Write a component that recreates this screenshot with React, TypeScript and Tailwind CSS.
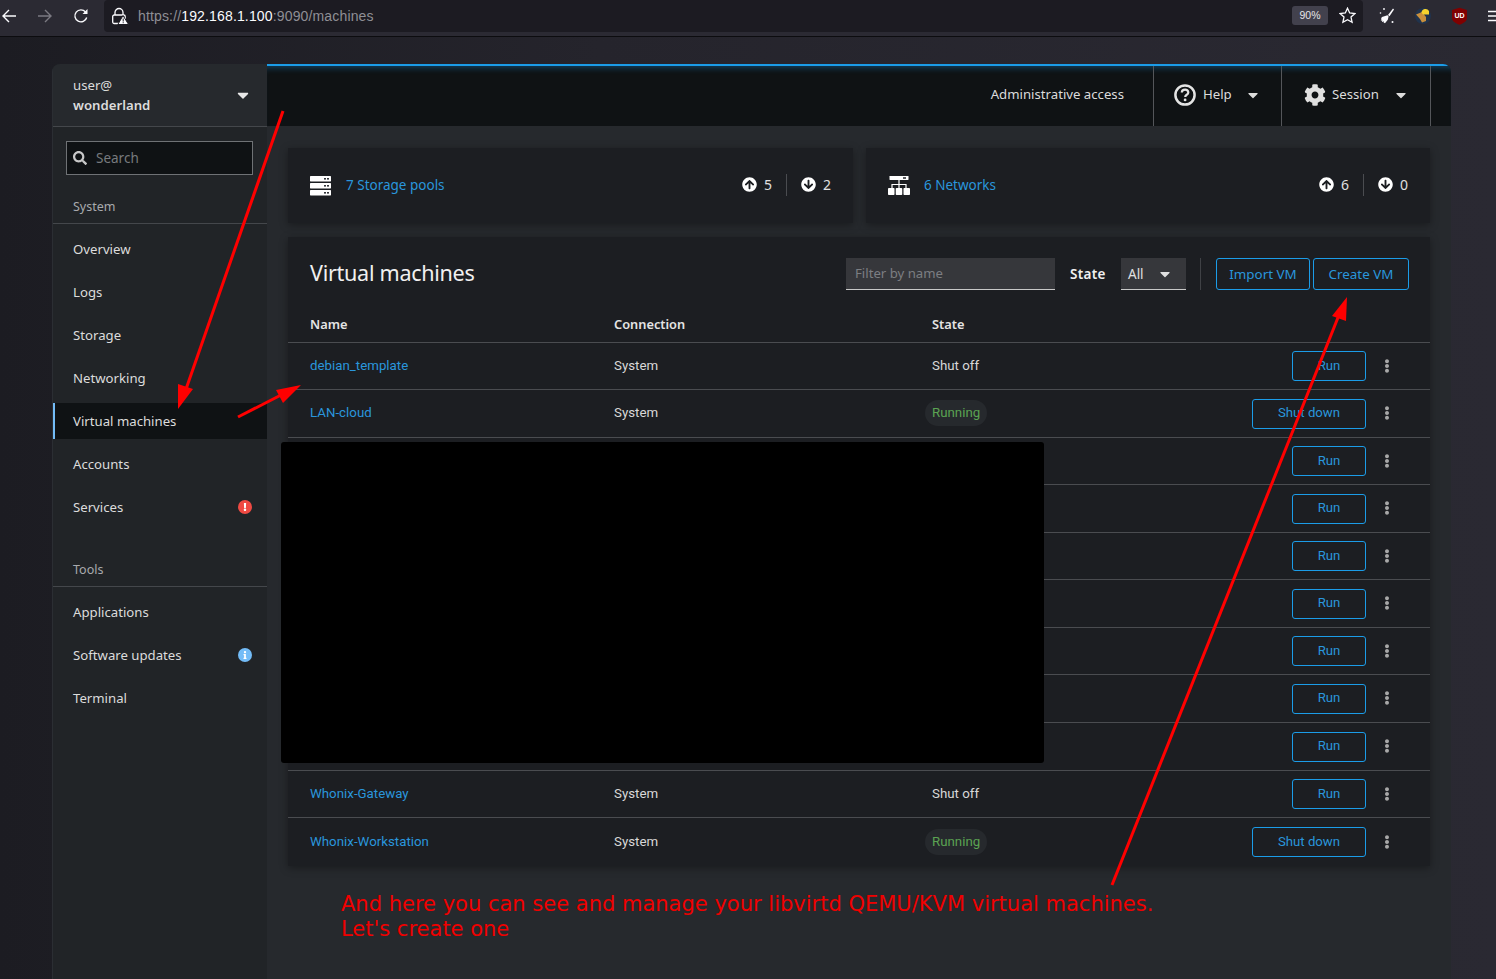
import React from "react";
import { FaArrowCircleUp, FaArrowCircleDown, FaCog, FaSearch, FaCaretDown, FaEllipsisV, FaExclamation, FaInfo } from "react-icons/fa";

const font = { fontFamily: '"Noto Sans", sans-serif' };
const tableFont = { fontFamily: 'Roboto, "Noto Sans", sans-serif' };

function Nav({ label, active, badge }: { label: string; active?: boolean; badge?: "err" | "info" }) {
  return (
    <div className={`h-[36px] flex items-center justify-between pr-[15px] text-[13.200px] text-[#dcdcdc] ${active ? "bg-[#0f1214] border-l-2 border-[#73bcf7] pl-[18px]" : "pl-[20px]"}`}>
      <span className="pt-[1px]">{label}</span>
      {badge === "err" && (
        <span className="w-[14px] h-[14px] rounded-full bg-[#ef4a43] flex items-center justify-center text-white"><FaExclamation size={8} /></span>
      )}
      {badge === "info" && (
        <span className="w-[14px] h-[14px] rounded-full bg-[#73bcf7] flex items-center justify-center text-white"><FaInfo size={8} /></span>
      )}
    </div>
  );
}

function SideHeading({ label }: { label: string }) {
  return (
    <div className="h-[27px] pl-[20px] border-b border-[#44474b] text-[12.500px] text-[#a8aaad] flex items-start">
      <span className="leading-[17px] mt-[1px]">{label}</span>
    </div>
  );
}

function ServerIcon() {
  return (
    <svg width="21" height="20" viewBox="0 0 21 20">
      <g fill="#fff">
        <rect x="0" y="0" width="21" height="5.400" rx="0.600" />
        <rect x="0" y="7" width="21" height="5.400" rx="0.600" />
        <rect x="0" y="14" width="21" height="5.400" rx="0.600" />
      </g>
      <g fill="#33353a">
        <rect x="14" y="2" width="2" height="1.600" /><rect x="17" y="2" width="2" height="1.600" />
        <rect x="14" y="9" width="2" height="1.600" /><rect x="17" y="9" width="2" height="1.600" />
        <rect x="14" y="16" width="2" height="1.600" /><rect x="17" y="16" width="2" height="1.600" />
      </g>
    </svg>
  );
}

function NetworkIcon() {
  return (
    <svg width="22" height="19" viewBox="0 0 22 19">
      <rect x="1.500" y="0" width="19" height="4" rx="0.400" fill="#fff" />
      <rect x="15" y="1.200" width="3" height="1.600" fill="#33353a" />
      <path d="M11 4v5M4 13V8.500h14V13M11 9v4" stroke="#fff" strokeWidth="1.200" fill="none" />
      <rect x="0" y="12" width="6.500" height="7" rx="0.800" fill="#fff" />
      <rect x="7.750" y="12" width="6.500" height="7" rx="0.800" fill="#fff" />
      <rect x="15.500" y="12" width="6.500" height="7" rx="0.800" fill="#fff" />
    </svg>
  );
}

function HelpIcon() {
  return (
    <svg width="22" height="22" viewBox="0 0 22 22">
      <circle cx="11" cy="11" r="9.600" fill="none" stroke="#e4e4e4" strokeWidth="2.500" />
      <path d="M7.800 8.600c0-1.800 1.400-3 3.300-3s3.200 1.100 3.200 2.800c0 2.400-3.100 2.300-3.100 4.500" fill="none" stroke="#e4e4e4" strokeWidth="2.200" />
      <circle cx="11.100" cy="15.900" r="1.400" fill="#e4e4e4" />
    </svg>
  );
}

function Toolbar() {
  return (
    <div className="h-[37px] shrink-0 bg-[#2b2a33] border-b border-[#0c0c0f] flex items-center text-white relative overflow-hidden">
      <div className="w-[104px] shrink-0 flex items-center pl-[1px] -mt-[4px]">
        <svg width="16" height="16" viewBox="0 0 16 16" className="mr-[20px]" fill="none" stroke="#fbfbfe" strokeWidth="1.400">
          <path d="M15 8H2M8 2 2 8l6 6" />
        </svg>
        <svg width="16" height="16" viewBox="0 0 16 16" className="mr-[20px]" fill="none" stroke="#7b7a82" strokeWidth="1.400">
          <path d="M1 8h13M8 2l6 6-6 6" />
        </svg>
        <svg width="16" height="16" viewBox="0 0 16 16" fill="none" stroke="#fbfbfe" strokeWidth="1.400">
          <path d="M13.700 9.500A6 6 0 1 1 12.500 4" />
          <path d="M14.500 1v5h-5z" fill="#fbfbfe" stroke="none" />
        </svg>
      </div>
      <div className="w-[1259px] shrink-0 h-[32px] -mt-[5px] bg-[#1c1b22] rounded-[4px] flex items-center">
        <svg width="18" height="18" viewBox="0 0 18 18" className="ml-[7px]">
          <path d="M4 8V5.500a4 4 0 0 1 8 0V8" fill="none" stroke="#fbfbfe" strokeWidth="1.300" />
          <rect x="1.700" y="8" width="12.500" height="8.500" rx="1.500" fill="none" stroke="#fbfbfe" strokeWidth="1.300" />
          <path d="M12 8.500 17.600 17.500H6.800z" fill="#fbfbfe" stroke="#1c1b22" />
          <rect x="11.700" y="11.500" width="1" height="3" fill="#1c1b22" />
          <rect x="11.700" y="15.200" width="1" height="1" fill="#1c1b22" />
        </svg>
        <span className="ml-[9px] pt-[1px] text-[14px] tracking-[0.15px]" style={{ fontFamily: '"Liberation Sans", sans-serif' }}>
          <span className="text-[#8f8f95]">https://</span>
          <span className="text-[#fbfbfe]">192.168.1.100</span>
          <span className="text-[#8f8f95]">:9090/machines</span>
        </span>
        <span className="ml-auto w-[36px] h-[19px] mr-[11px] bg-[#42414d] rounded-[3px] text-[10.500px] text-[#e5e5e8] flex items-center justify-center" style={{ fontFamily: '"Liberation Sans", sans-serif' }}>90%</span>
        <svg width="17" height="17" viewBox="0 0 17 17" className="mr-[7px]" fill="none" stroke="#fbfbfe" strokeWidth="1.300">
          <path d="M8.500 1.200l2.200 4.800 5.200.6-3.900 3.500 1.100 5.200-4.600-2.600-4.600 2.600 1.100-5.200L1.100 6.600l5.200-.6z" />
        </svg>
      </div>
      <div className="flex items-center ml-[15px] shrink-0 -mt-[5px]">
        <svg width="18" height="18" viewBox="0 0 18 18" fill="#fbfbfe" className="mr-[18px]">
          <path d="M15 1.500 10 8l1.500 1.200L16 2.400z" />
          <path d="M9.500 8.300 4 10l-1 1.500.7.400-1 1.300.9.500.7-.8-.4 1.500 1 .7 1-1.200-.3 1.700 1.400.6 2.800-3.400.8-3.200z" />
          <circle cx="6" cy="2" r="0.900" /><circle cx="2.500" cy="6" r="0.800" /><circle cx="14.500" cy="15" r="1" />
        </svg>
        <svg width="18" height="18" viewBox="0 0 18 18" className="mr-[19px]">
          <circle cx="9" cy="9" r="8" fill="#20334d" />
          <path d="M2 7.500 8 5l4 5v4l-4 1.500-2-3.500z" fill="#c98f3c" />
          <path d="M7.500 5.500a4 3.800 0 0 1 7.500-1.500v3.500H9z" fill="#f6d32d" />
        </svg>
        <svg width="17" height="18" viewBox="0 0 17 18" className="mr-[20px]">
          <path d="M1 3 8.500 0.800 16 3v8c0 3-3.500 5.500-7.500 6.800C4.500 16.500 1 14 1 11z" fill="#800000" />
          <text x="8.500" y="11" textAnchor="middle" fontSize="7" fontWeight="700" fill="#fff" fontFamily="Liberation Sans, sans-serif">UD</text>
        </svg>
        <svg width="16" height="14" viewBox="0 0 16 14" stroke="#fbfbfe" strokeWidth="1.300" className="shrink-0">
          <path d="M0 2.500h14M0 7h14M0 11.500h14" />
        </svg>
      </div>
    </div>
  );
}

function Outline({ children, w, h, narrow }: { children: React.ReactNode; w: string; h: string; narrow?: boolean }) {
  return (
    <div
      className={`${w} ${h} border border-[#1b9ce8] rounded-[3px] flex items-center justify-center text-[#2a96dc] ${narrow ? "text-[13.200px] pb-[1px]" : "text-[13.400px]"}`}
      style={narrow ? tableFont : undefined}
    >
      {children}
    </div>
  );
}

type Row = { name?: string; conn?: string; state?: string; action: string; h: string };
const rows: Row[] = [
  { name: "debian_template", conn: "System", state: "Shut off", action: "Run", h: "h-[47px]" },
  { name: "LAN-cloud", conn: "System", state: "Running", action: "Shut down", h: "h-[48px]" },
  { action: "Run", h: "h-[47px]" },
  { action: "Run", h: "h-[48px]" },
  { action: "Run", h: "h-[47px]" },
  { action: "Run", h: "h-[48px]" },
  { action: "Run", h: "h-[47px]" },
  { action: "Run", h: "h-[48px]" },
  { action: "Run", h: "h-[48px]" },
  { name: "Whonix-Gateway", conn: "System", state: "Shut off", action: "Run", h: "h-[47px]" },
  { name: "Whonix-Workstation", conn: "System", state: "Running", action: "Shut down", h: "h-[48px]" },
];

function VmRow({ r, last }: { r: Row; last: boolean }) {
  return (
    <div className={`${r.h} flex items-center text-[13.300px] ${last ? "" : "border-b border-[#4a4c50]"}`} style={tableFont}>
      <div className="w-[304px] pl-[22px] shrink-0 box-content text-[#2a96dc] -mt-[1px]">{r.name}</div>
      <div className="w-[318px] shrink-0 text-[#d8d8d8] -mt-[1px]">{r.conn}</div>
      <div className="flex-1 text-[#d8d8d8] -mt-[1px]">
        {r.state === "Running" ? (
          <span className="inline-flex items-center h-[26px] px-[7px] ml-[-7px] rounded-full bg-[#26292d] text-[#5ba352]">Running</span>
        ) : (
          r.state
        )}
      </div>
      <Outline narrow w={r.action === "Run" ? "w-[74px]" : "w-[114px]"} h="h-[30px]">{r.action}</Outline>
      <div className="w-[64px] pl-[14px] shrink-0 text-[#a8a8a8] -mt-[1px]"><FaEllipsisV size={14} /></div>
    </div>
  );
}

function Stat({ up, n }: { up?: boolean; n: string }) {
  return (
    <span className="flex items-center gap-[7px] text-[14px] text-[#e0e0e0]">
      {up ? <FaArrowCircleUp size={15} color="#fff" /> : <FaArrowCircleDown size={15} color="#fff" />}
      {n}
    </span>
  );
}

function SummaryCard({ icon, label, a, b, w, iconGap }: { icon: React.ReactNode; label: string; a: string; b: string; w: string; iconGap: string }) {
  return (
    <div className={`${w} h-[75px] bg-[#1c1e22] shadow-[0_2px_8px_rgba(0,0,0,0.35)] flex items-center pl-[22px] pr-[22px]`}>
      {icon}
      <span className={`${iconGap} text-[13.500px] text-[#2a96dc]`}>{label}</span>
      <div className="ml-auto flex items-center pb-[2px]">
        <Stat up n={a} />
        <span className="w-px h-[22px] bg-[#4a4c50] mx-[14px]" />
        <Stat n={b} />
      </div>
    </div>
  );
}

export default function App() {
  return (
    <div className="w-[1496px] h-[979px] overflow-hidden relative flex flex-col bg-[linear-gradient(90deg,#1c1c22_0%,#25242c_40%,#2a2932_100%)]" style={font}>
      <Toolbar />
      <div className="flex-1 pt-[27px] pl-[52px] min-h-0">
        <div className="w-[1399px] h-full flex rounded-t-[8px] overflow-hidden">
          <aside className="w-[215px] shrink-0 bg-[#212427] flex flex-col border-l border-[#2b2e33]">
            <div className="h-[63px] shrink-0 bg-[#26292d] border-b border-[#44474b] flex items-center pl-[20px] pr-[17px] justify-between">
              <div className="text-[13.200px] leading-[20px] text-[#dcdcdc]">
                <div>user@</div>
                <div className="font-semibold">wonderland</div>
              </div>
              <span className="-mr-[2px]"><FaCaretDown size={18} color="#e8e8e8" /></span>
            </div>
            <div className="pt-[14px] pl-[13px] pr-[14px]">
              <div className="h-[34px] bg-[#0f1214] border border-[#6f7275] flex items-center pl-[6px] gap-[9px] text-[13.500px] text-[#777a7d]">
                <FaSearch size={14} color="#c8c8c8" />
                <span>Search</span>
              </div>
            </div>
            <div className="mt-[22px]"><SideHeading label="System" /></div>
            <div className="pt-[7px] flex flex-col gap-[7px]">
              <Nav label="Overview" />
              <Nav label="Logs" />
              <Nav label="Storage" />
              <Nav label="Networking" />
              <Nav label="Virtual machines" active />
              <Nav label="Accounts" />
              <Nav label="Services" badge="err" />
            </div>
            <div className="mt-[35px]"><SideHeading label="Tools" /></div>
            <div className="pt-[7px] flex flex-col gap-[7px]">
              <Nav label="Applications" />
              <Nav label="Software updates" badge="info" />
              <Nav label="Terminal" />
            </div>
          </aside>
          <main className="flex-1 flex flex-col bg-[#26292d] min-w-0">
            <header className="h-[62px] shrink-0 bg-[#0f1214] border-t-2 border-[#1b9ce8] shadow-[inset_0_7px_6px_-5px_rgba(27,156,232,0.35)] flex items-stretch justify-end pr-[20px] text-[13.200px] text-[#dcdcdc] relative">
              <div className="flex items-center pr-[29px] pb-[3px]">Administrative access</div>
              <div className="w-[128px] border-l border-[#54565a] flex items-center pl-[20px] pb-[3px]">
                <HelpIcon />
                <span className="ml-[7px]">Help</span>
                <span className="ml-[13px]"><FaCaretDown size={16} /></span>
              </div>
              <div className="w-[150px] border-l border-r border-[#54565a] flex items-center pl-[22px] pb-[3px]">
                <FaCog size={22} color="#e0e0e0" />
                <span className="ml-[6px]">Session</span>
                <span className="ml-[14px]"><FaCaretDown size={16} /></span>
              </div>
            </header>
            <div className="pt-[22px] pl-[21px] pr-[21px] flex-1 min-h-0">
              <div className="flex gap-[13px]">
                <SummaryCard w="w-[565px]" iconGap="ml-[15px]" icon={<ServerIcon />} label="7 Storage pools" a="5" b="2" />
                <SummaryCard w="w-[564px]" iconGap="ml-[14px]" icon={<NetworkIcon />} label="6 Networks" a="6" b="0" />
              </div>
              <section className="mt-[14px] w-[1142px] bg-[#1c1e22] shadow-[0_2px_8px_rgba(0,0,0,0.35)]">
                <div className="h-[70px] flex items-center pl-[22px] pr-[21px] pt-[4px]">
                  <h1 className="text-[21.600px] tracking-[-0.3px] text-[#f0f0f0] -mt-[1px]">Virtual machines</h1>
                  <div className="ml-auto w-[209px] h-[32px] bg-[#36373b] border-b border-[#c8c8c8] flex items-center pl-[9px] pt-[1px] text-[13.200px] text-[#7c7e82]">Filter by name</div>
                  <span className="ml-[15px] w-[37px] font-semibold text-[13.500px] tracking-[0.3px] text-[#f0f0f0] whitespace-nowrap">State</span>
                  <div className="ml-[14px] w-[65px] h-[32px] bg-[#36373b] border-b border-[#c8c8c8] flex items-center justify-between pl-[7px] pr-[13px] pt-[1px] text-[13.500px] text-[#e0e0e0]">
                    All <FaCaretDown size={16} />
                  </div>
                  <span className="w-px h-[32px] bg-[#3f4145] ml-[14px] mr-[15px]" />
                  <Outline w="w-[94px]" h="h-[32px]">Import VM</Outline>
                  <span className="ml-[3px]"><Outline w="w-[96px]" h="h-[32px]">Create VM</Outline></span>
                </div>
                <div className="h-[36px] flex items-center border-b border-[#4a4c50] text-[12.800px] font-semibold text-[#e4e4e4]">
                  <div className="w-[304px] pl-[22px] shrink-0 box-content">Name</div>
                  <div className="w-[318px] shrink-0">Connection</div>
                  <div>State</div>
                </div>
                {rows.map((r, i) => (
                  <VmRow key={i} r={r} last={i === rows.length - 1} />
                ))}
              </section>
            </div>
          </main>
        </div>
      </div>

      {/* redaction block laid over the table */}
      <div className="absolute left-[281px] top-[442px] w-[763px] h-[321px] bg-black rounded-[3px]" />

      {/* hand-drawn annotations */}
      <svg className="absolute inset-0 pointer-events-none" width="1496" height="979" viewBox="0 0 1496 979">
        <g stroke="#ff0000" strokeWidth="3" fill="#ff0000">
          <path d="M283 111 185 392" />
          <path d="M178 409 178 384 193 389z" stroke="none" />
          <path d="M238 417 283 394" />
          <path d="M301 385 276 390 283 403z" stroke="none" />
          <path d="M1112 885 1339 315" />
          <path d="M1347 297 1332 316 1346 321z" stroke="none" />
        </g>
      </svg>
      <div className="absolute left-[341px] top-[892px] text-[21px] leading-[25px] text-[#f00000]" style={{ fontFamily: '"DejaVu Sans", sans-serif' }}>
        <div>And here you can see and manage your libvirtd QEMU/KVM virtual machines.</div>
        <div>Let's create one</div>
      </div>
    </div>
  );
}
